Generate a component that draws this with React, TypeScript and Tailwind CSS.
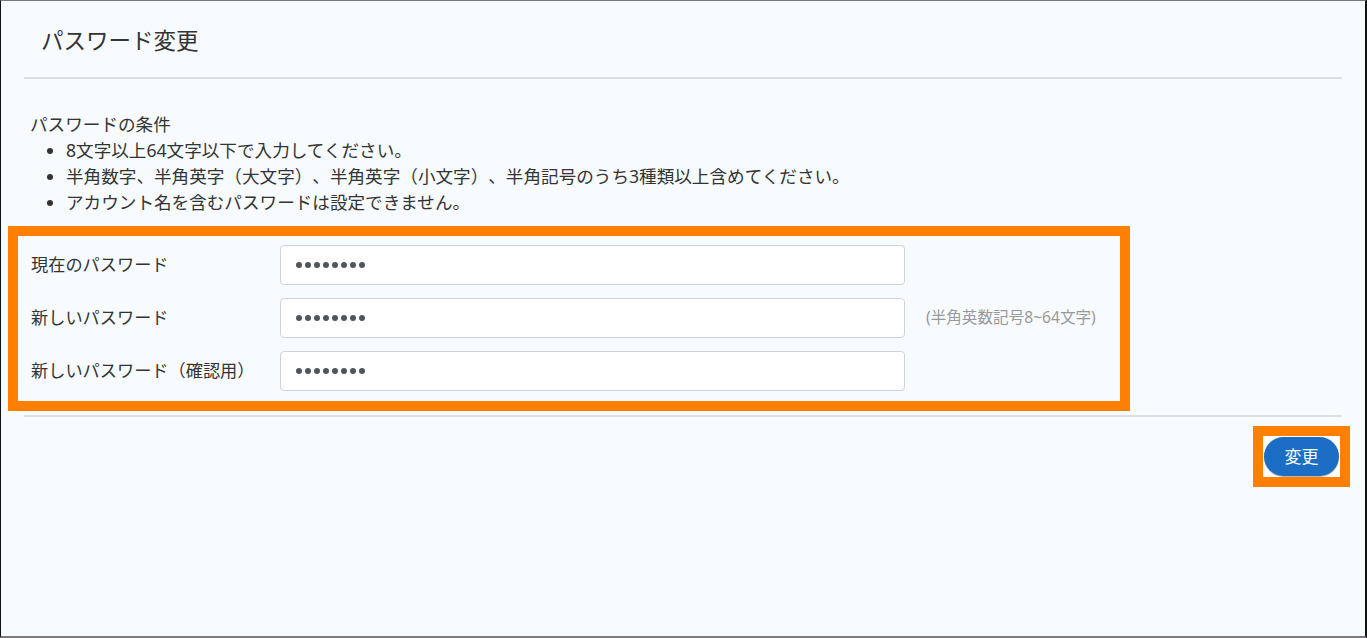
import React from "react";

const font = { fontFamily: '"Noto Sans", "Noto Sans CJK JP", sans-serif' };

function Dots() {
  return (
    <div className="flex gap-[3px]">
      {Array.from({ length: 8 }).map((_, i) => (
        <span key={i} className="w-[6px] h-[6px] rounded-full bg-[#50555b]" />
      ))}
    </div>
  );
}

function Row({ label, hint }: { label: string; hint?: string }) {
  return (
    <div className="flex items-center h-[40px]">
      <div className="w-[262px] pl-[13px] text-[17.2px] text-[#333]">{label}</div>
      <div className="w-[625px] h-[40px] bg-white border border-[#cfd3d8] rounded-[4px] flex items-center pl-[15px]">
        <Dots />
      </div>
      {hint && <div className="ml-[21px] text-[15.6px] text-[#999]">{hint}</div>}
    </div>
  );
}

export default function App() {
  return (
    <div
      style={font}
      className="w-[1367px] h-[638px] bg-[#f7fbfe] border-t border-t-[#7a7a7a] border-l border-l-[#111] border-r-2 border-r-[#111] border-b-2 border-b-[#7a7a7a] box-border overflow-hidden [text-spacing-trim:space-all]"
    >
      <div className="h-[76px] flex items-center pl-[40px] pt-[3px] text-[22.5px] text-[#333]">パスワード変更</div>
      <div className="mx-[23px] h-[2px] bg-[#dcdfe3]" />
      <div className="pl-[29px] pt-[32px] text-[17.6px] text-[#333] leading-[26px]">
        <div>パスワードの条件</div>
        <ul className="list-disc pl-[36px]">
          <li>8文字以上64文字以下で入力してください。</li>
          <li>半角数字、半角英字（大文字）、半角英字（小文字）、半角記号のうち3種類以上含めてください。</li>
          <li>アカウント名を含むパスワードは設定できません。</li>
        </ul>
      </div>
      <div className="ml-[7px] mt-[11px] w-[1122px] border-[10px] border-[#ff8000] pt-[9px] pb-[10px] flex flex-col gap-[13px]">
        <Row label="現在のパスワード" />
        <Row label="新しいパスワード" hint="(半角英数記号8~64文字)" />
        <Row label="新しいパスワード（確認用）" />
      </div>
      <div className="mx-[23px] mt-[4px] h-[2px] bg-[#dcdfe3]" />
      <div className="flex justify-end pr-[15px] mt-[9px]">
        <div className="border-[10px] border-[#ff8000] bg-white p-[1px] w-[97px] h-[61px] box-border">
          <button className="w-full h-full rounded-full bg-[#1b6ec3] text-white text-[17px] shadow-[0_1px_1px_rgba(0,0,0,0.3)]">
            変更
          </button>
        </div>
      </div>
    </div>
  );
}
